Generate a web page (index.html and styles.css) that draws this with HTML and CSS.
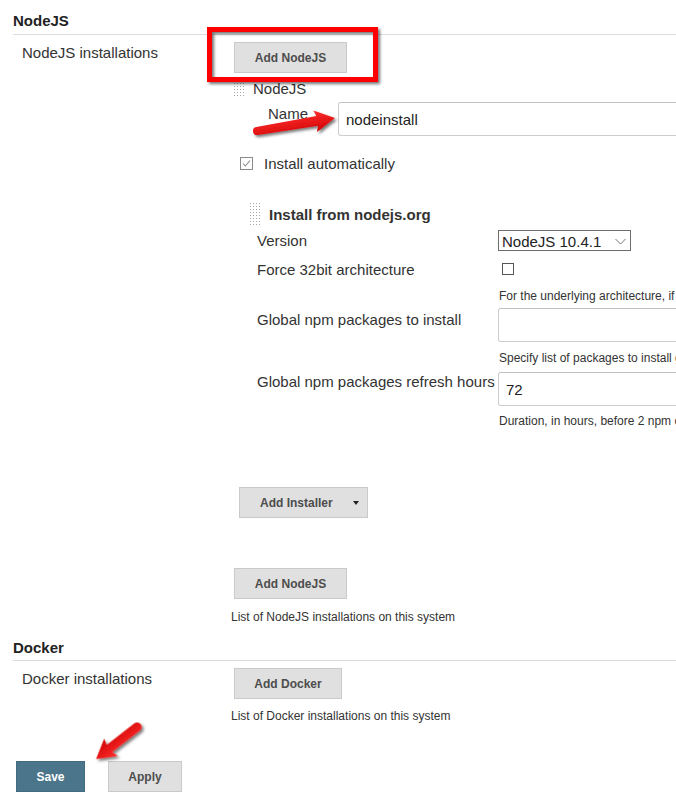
FILE: index.html
```html
<!DOCTYPE html>
<html>
<head>
<meta charset="utf-8">
<link rel="stylesheet" href="styles.css">
</head>
<body>
<div class="page">
  <div class="section-head">NodeJS</div>
  <div class="row">
    <div class="label">NodeJS installations</div>
    <div class="content">
      <button class="btn btn-node">Add NodeJS</button>
      <div class="repeated">
        <div class="rep-head"><span class="grip"></span><span class="txt">NodeJS</span></div>
        <div class="name-row">
          <span class="name-label">Name</span>
          <div class="input input-name">nodeinstall</div>
        </div>
        <div class="check-row">
          <svg class="cb-checked" width="13" height="13" viewBox="0 0 13 13"><rect x="0.5" y="0.5" width="12" height="12" fill="#fff" stroke="#8a8a8a"/><polyline points="3,6.5 5.3,9 10,3.5" fill="none" stroke="#8a8a8a" stroke-width="1.1"/></svg>
          <span class="txt">Install automatically</span>
        </div>
        <div class="installer">
          <div class="inst-head"><span class="grip grip-tall"></span><b class="txt">Install from nodejs.org</b></div>
          <div class="frow version-row">
            <div class="flabel">Version</div>
            <div class="select"><span>NodeJS 10.4.1</span><svg class="chev" width="11" height="7" viewBox="0 0 11 7"><polyline points="0.5,1 5.5,6 10.5,1" fill="none" stroke="#777" stroke-width="1"/></svg></div>
          </div>
          <div class="frow force-row">
            <div class="flabel">Force 32bit architecture</div>
            <span class="cb"></span>
          </div>
          <div class="fdesc desc1">For the underlying architecture, if enabled force the installation of the 32bit package</div>
          <div class="frow npm-row">
            <div class="flabel flabel-pad">Global npm packages to install</div>
            <div class="input input-field"></div>
          </div>
          <div class="fdesc desc2">Specify list of packages to install globally</div>
          <div class="frow refresh-row">
            <div class="flabel flabel-up">Global npm packages refresh hours</div>
            <div class="input input-field">72</div>
          </div>
          <div class="fdesc desc3">Duration, in hours, before 2 npm cache update</div>
        </div>
        <button class="btn btn-installer">Add Installer<span class="caret"></span></button>
      </div>
      <button class="btn btn-node btn-node2">Add NodeJS</button>
      <div class="desc desc-node">List of NodeJS installations on this system</div>
    </div>
  </div>

  <div class="section-head docker-head">Docker</div>
  <div class="row">
    <div class="label label-docker">Docker installations</div>
    <div class="content">
      <button class="btn btn-docker">Add Docker</button>
      <div class="desc desc-docker">List of Docker installations on this system</div>
    </div>
  </div>

  <div class="actions">
    <button class="btn btn-save">Save</button>
    <button class="btn btn-apply">Apply</button>
  </div>
</div>

<svg class="annot" width="676" height="811" viewBox="0 0 676 811">
  <defs>
    <filter id="sh" x="-20%" y="-20%" width="140%" height="160%">
      <feDropShadow dx="2" dy="2" stdDeviation="1.5" flood-color="#000" flood-opacity="0.55"/>
    </filter>
    <linearGradient id="rg" x1="0" y1="0" x2="0" y2="1">
      <stop offset="0" stop-color="#ff3030"/>
      <stop offset="1" stop-color="#d00000"/>
    </linearGradient>
  </defs>
  <rect x="209.5" y="29.5" width="166" height="50" fill="none" stroke="#ff0000" stroke-width="5" filter="url(#sh)"/>
  <g filter="url(#sh)">
    <path transform="translate(257 131) rotate(-9.5)" d="M0,-4 L61,-5 L59,-11 L79,0 L59,11 L61,5 L0,4 A4,4 0 0 1 0,-4 Z" fill="url(#rg)"/>
    <path transform="translate(137 727) rotate(142)" d="M0,-4.5 L35,-4.5 L33,-11 L52,0 L33,11 L35,4.5 L0,4.5 A4.5,4.5 0 0 1 0,-4.5 Z" fill="url(#rg)"/>
  </g>
</svg>
</body>
</html>
```

FILE: styles.css
```css
html, body {
  margin: 0;
  padding: 0;
  overflow: hidden;
}

body {
  width: 676px;
  height: 811px;
  position: relative;
  background: #fff;
  color: #333;
  font-family: "Liberation Sans", Arial, sans-serif;
  font-size: 15px;
}

.page {
  width: 676px;
  overflow: hidden;
}

.section-head {
  margin-left: 13px;
  padding-top: 11px;
  padding-bottom: 3px;
  border-bottom: 1px solid #dcdcdc;
  font-weight: bold;
  font-size: 15px;
  line-height: 20px;
  color: #222;
}

.docker-head {
  margin-top: 2px;
  padding-bottom: 2px;
}

.row {
  display: flex;
}

.label {
  flex: none;
  width: 209px;
  padding-left: 22px;
  padding-top: 8px;
  font-size: 15px;
  line-height: 20px;
}

.content {
  flex: 1;
  min-width: 0;
  padding-top: 7px;
}

.btn {
  display: block;
  box-sizing: border-box;
  height: 31px;
  margin: 0;
  padding: 0;
  background: #e0e0e0;
  border: 1px solid #cacaca;
  border-radius: 0;
  font-family: "Liberation Sans", Arial, sans-serif;
  font-weight: bold;
  font-size: 12px;
  line-height: 30px;
  color: #4d4d4d;
  text-align: center;
}

.btn-node {
  width: 113px;
  margin-left: 3px;
}

.btn-node2 {
  margin-top: 50px;
}

.repeated {
  margin-left: 3px;
  margin-top: 5px;
}

.rep-head {
  display: flex;
  align-items: center;
  height: 20px;
  line-height: 20px;
}

.txt {
  padding-top: 1px;
}

.grip {
  flex: none;
  width: 10px;
  height: 16px;
  margin-right: 9px;
  background-color: #a8a8a8;
  background-image:
    linear-gradient(to right, transparent 1px, #fff 1px),
    linear-gradient(to bottom, transparent 1px, #fff 1px);
  background-size: 3px 3px, 3px 3px;
}

.grip-tall {
  width: 11px;
  height: 22px;
  margin-right: 8px;
}

.name-row {
  display: flex;
  margin-top: 4px;
}

.name-label {
  flex: none;
  width: 70px;
  padding-left: 34px;
  padding-top: 2px;
  line-height: 20px;
}

.input {
  flex: none;
  box-sizing: border-box;
  height: 34px;
  border: 1px solid #cccccc;
  border-top-color: #c2c2c2;
  border-radius: 3px;
  padding-left: 7px;
  font-size: 15px;
  line-height: 33px;
  color: #222;
  background: #fff;
}

.input-name {
  width: 420px;
}

.input-field {
  width: 300px;
}

.check-row {
  display: flex;
  align-items: flex-start;
  margin-top: 17px;
  height: 20px;
  line-height: 20px;
}

.cb-checked {
  flex: none;
  margin-left: 6px;
  margin-top: 4px;
  margin-right: 11px;
}

.installer {
  margin-left: 16px;
  margin-top: 31px;
}

.inst-head {
  display: flex;
  align-items: center;
  height: 20px;
  line-height: 20px;
}

.inst-head b {
  color: #333;
}

.frow {
  display: flex;
  align-items: flex-start;
}

.flabel {
  flex: none;
  box-sizing: border-box;
  height: 21px;
  width: 248px;
  padding-left: 7px;
  padding-top: 1px;
  line-height: 20px;
  white-space: nowrap;
}

.flabel-pad {
  padding-top: 2px;
  height: 22px;
}

.flabel-up {
  padding-top: 0;
}

.version-row {
  margin-top: 6px;
}

.select {
  flex: none;
  display: flex;
  align-items: center;
  box-sizing: border-box;
  width: 133px;
  height: 21px;
  border: 1px solid #6e6e6e;
  padding-left: 3px;
  padding-top: 1px;
  font-size: 15px;
  line-height: 19px;
  color: #222;
}

.chev {
  margin-left: auto;
  margin-right: 4px;
}

.force-row {
  margin-top: 8px;
}

.cb {
  flex: none;
  box-sizing: border-box;
  width: 12px;
  height: 12px;
  margin-left: 4px;
  margin-top: 4px;
  border: 1px solid #555;
  background: #fff;
}

.fdesc {
  margin-left: 249px;
  font-size: 12px;
  line-height: 16px;
  white-space: nowrap;
}

.desc1 {
  margin-top: 8px;
}

.npm-row {
  margin-top: 4px;
}

.desc2 {
  margin-top: 8px;
}

.refresh-row {
  margin-top: 6px;
}

.desc3 {
  margin-top: 7px;
}

.btn-installer {
  display: flex;
  align-items: center;
  width: 129px;
  margin-left: 5px;
  margin-top: 58px;
  padding-left: 20px;
  text-align: left;
}

.caret {
  width: 0;
  height: 0;
  margin-left: 20px;
  border-left: 3.5px solid transparent;
  border-right: 3.5px solid transparent;
  border-top: 4px solid #222;
}

.desc {
  font-size: 12px;
  line-height: 16px;
  white-space: nowrap;
}

.desc-node {
  margin-top: 10px;
}

.label-docker {
  padding-top: 8px;
}

.btn-docker {
  width: 108px;
  margin-left: 3px;
}

.desc-docker {
  margin-top: 9px;
}

.actions {
  display: flex;
  gap: 23px;
  margin-top: 37px;
  padding-left: 16px;
}

.btn-save {
  width: 69px;
  background: #4b758b;
  border-color: #416b80;
  color: #fff;
}

.btn-apply {
  width: 74px;
}

.annot {
  position: absolute;
  top: 0;
  left: 0;
  pointer-events: none;
}
```
